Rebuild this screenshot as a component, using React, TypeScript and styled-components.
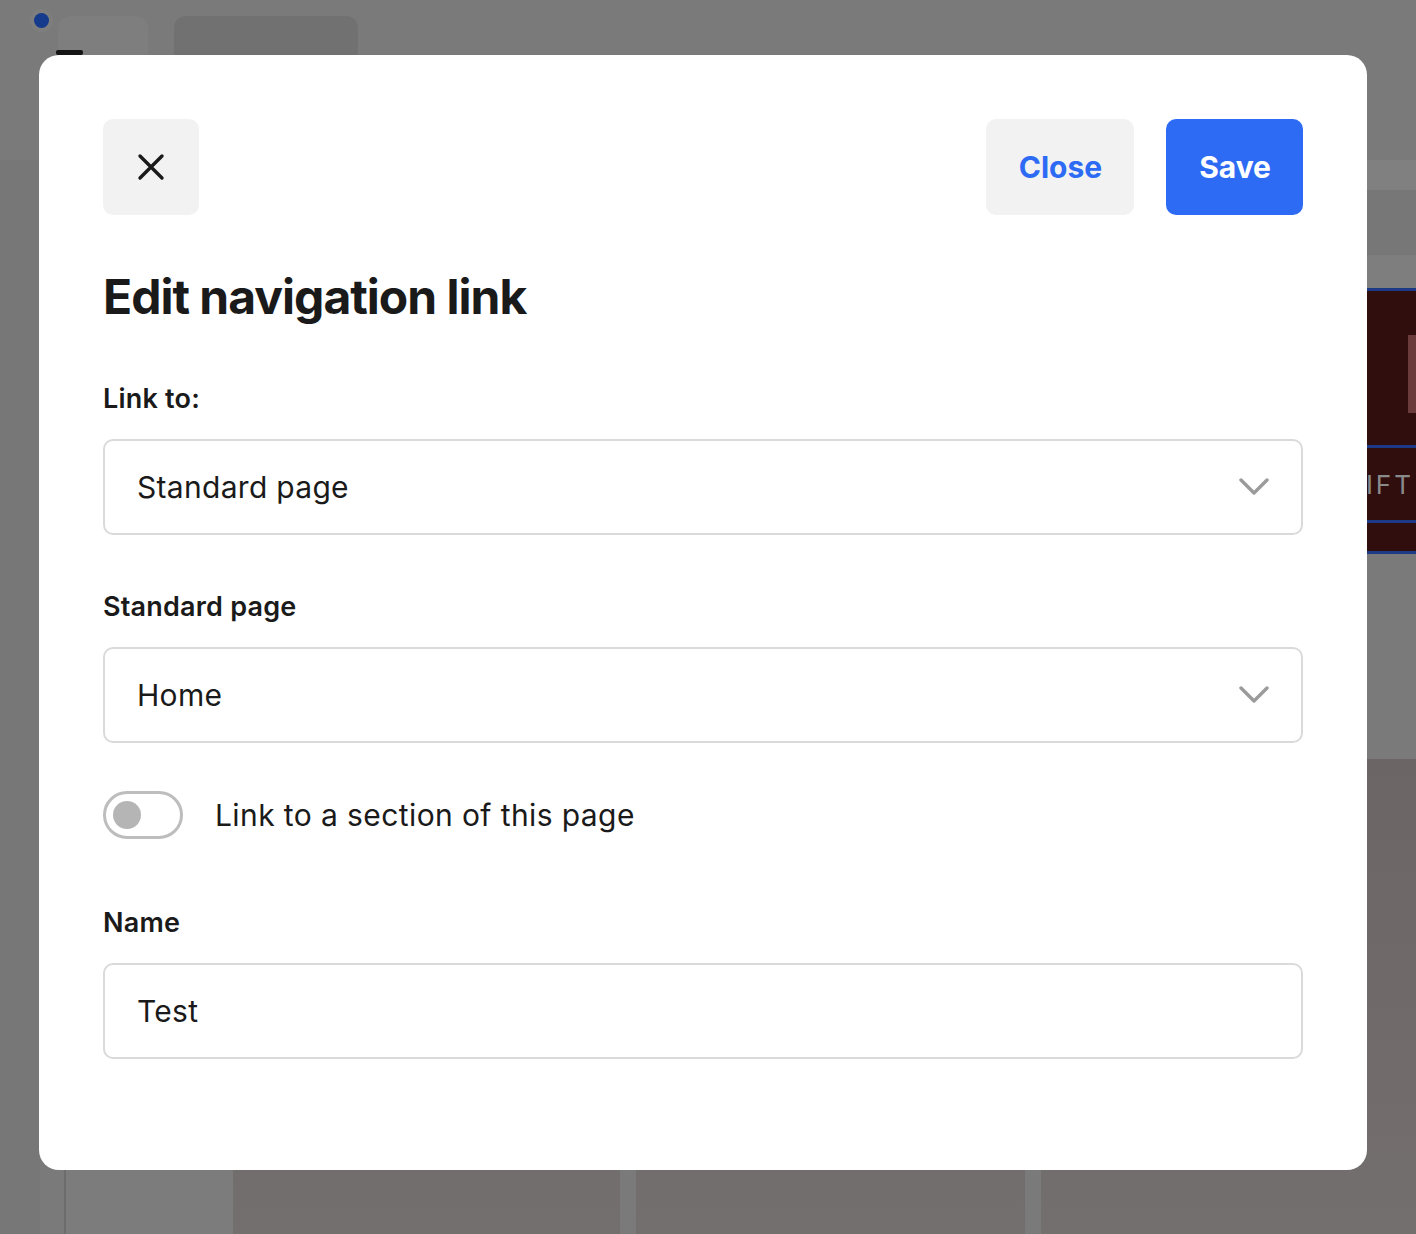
import React from 'react'
import styled, { createGlobalStyle } from 'styled-components'

const GlobalStyle = createGlobalStyle`
  html, body {
    margin: 0;
    padding: 0;
    width: 1416px;
    height: 1234px;
    overflow: hidden;
    background: #7a7a7a;
    font-family: Inter, "Liberation Sans", sans-serif;
  }
  * { box-sizing: border-box; }
`

/* ---------- dimmed page behind the dialog ---------- */

const Page = styled.div`
  width: 1416px;
  height: 1234px;
  display: flex;
  flex-direction: column;
  background: #7a7a7a;
`

const TopBar = styled.div`
  height: 160px;
  flex-shrink: 0;
  display: flex;
  align-items: flex-start;
  padding: 16px 0 0 34px;
  gap: 10px;
`

const Dot = styled.span`
  width: 15px;
  height: 15px;
  margin-top: -3px;
  border-radius: 50%;
  background: #163a8c;
  box-shadow: 0 0 0 4px #7e7e7e;
`

const SideCard = styled.div`
  width: 90px;
  height: 160px;
  margin-left: -1px;
  border-radius: 12px 12px 0 0;
  background: #7e7e7e;
  padding: 34px 0 0 0;
`

const MenuBar = styled.div`
  width: 27px;
  height: 5px;
  margin-left: -2px;
  background: #151515;
  border-radius: 2px;
`

const Tab = styled.div`
  width: 184px;
  height: 140px;
  margin-left: 16px;
  border-radius: 12px 12px 0 0;
  background: #717171;
`

const Body = styled.div`
  flex: 1;
  display: flex;
`

const Sidebar = styled.div`
  width: 233px;
  flex-shrink: 0;
  display: flex;
`

const Gutter = styled.div`
  width: 40px;
  background: #777777;
`

const Rail = styled.div`
  width: 26px;
  background: #7a7a7a;
  border-right: 2px solid #6c6c6c;
`

const SidePanel = styled.div`
  flex: 1;
  background: linear-gradient(#7a7a7a, #7c7c7c);
`

const Main = styled.div`
  flex: 1;
  display: flex;
  flex-direction: column;
`

const Band = styled.div<{ $h: number; $bg: string }>`
  height: ${(p) => p.$h}px;
  flex-shrink: 0;
  background: ${(p) => p.$bg};
`

const Banner = styled.div`
  height: 266px;
  flex-shrink: 0;
  background: #300e0e;
  border-top: 3px solid #1d3a86;
  border-bottom: 3px solid #1d3a86;
  display: flex;
  flex-direction: column;
  align-items: flex-end;
`

const BannerImage = styled.div`
  width: 8px;
  height: 78px;
  margin-top: 44px;
  background: #6b3a3a;
`

const BannerNav = styled.div`
  align-self: stretch;
  margin-top: 32px;
  height: 78px;
  border-top: 3px solid #1d3a86;
  border-bottom: 3px solid #1d3a86;
  display: flex;
  align-items: center;
  justify-content: flex-end;
  padding-right: 2px;
  color: #8a8a8a;
  font-size: 26px;
  letter-spacing: 3px;
  white-space: nowrap;
`

const CardGrid = styled.div`
  flex: 1;
  display: grid;
  grid-template-columns: 387px 389px 1fr;
  gap: 16px;
  padding-top: 205px;
`

const Card = styled.div`
  background: linear-gradient(#6b6665, #736f6e);
`

/* ---------- dialog ---------- */

const Overlay = styled.div`
  position: fixed;
  inset: 0;
  padding: 55px 0 0 39px;
`

const Dialog = styled.div`
  width: 1328px;
  height: 1115px;
  background: #ffffff;
  border-radius: 20px;
  padding: 64px 64px 111px;
  display: flex;
  flex-direction: column;
  color: #1a1a1a;
`

const Toolbar = styled.div`
  display: flex;
  align-items: center;
  gap: 32px;
`

const IconButton = styled.button`
  width: 96px;
  height: 96px;
  border: none;
  border-radius: 10px;
  background: #f2f2f2;
  display: flex;
  align-items: center;
  justify-content: center;
  padding: 0;
  margin-right: auto;
`

const ActionButton = styled.button<{ $primary?: boolean }>`
  height: 96px;
  padding: 0 32px 0 33px;
  border: none;
  border-radius: 10px;
  font-family: Inter, "Liberation Sans", sans-serif;
  font-size: 30px;
  font-weight: 700;
  background: ${(p) => (p.$primary ? '#2e6bf5' : '#f2f2f2')};
  color: ${(p) => (p.$primary ? '#ffffff' : '#2e6bf5')};
`

const Title = styled.h1`
  margin: 53px 0 0;
  font-size: 48px;
  line-height: 58px;
  font-weight: 700;
  letter-spacing: -1px;
`

const Field = styled.div<{ $gap: number }>`
  margin-top: ${(p) => p.$gap}px;
  display: flex;
  flex-direction: column;
  gap: 23px;
`

const Label = styled.label`
  font-size: 27px;
  line-height: 34px;
  font-weight: 600;
  letter-spacing: 0.2px;
`

const Control = styled.div`
  height: 96px;
  border: 2px solid #dadada;
  border-radius: 10px;
  display: flex;
  align-items: center;
  justify-content: space-between;
  padding: 0 32px;
  font-size: 30px;
  font-weight: 400;
  letter-spacing: 0.3px;
`

const ToggleRow = styled.div`
  margin-top: 48px;
  display: flex;
  align-items: center;
  gap: 32px;
  font-size: 30px;
  letter-spacing: 0.4px;
`

const Switch = styled.span`
  width: 80px;
  height: 48px;
  border: 3px solid #bdbdbd;
  border-radius: 24px;
  display: flex;
  align-items: center;
  padding: 0 7px;
`

const Knob = styled.span`
  width: 28px;
  height: 28px;
  border-radius: 50%;
  background: #b5b5b5;
`

const CloseIcon = () => (
  <svg width="28" height="28" viewBox="0 0 28 28">
    <path d="M3 3 L25 25 M25 3 L3 25" stroke="#1a1a1a" strokeWidth="3.4" strokeLinecap="round" />
  </svg>
)

const Chevron = () => (
  <svg width="30" height="18" viewBox="0 0 30 18">
    <polyline points="2,2 15,15 28,2" fill="none" stroke="#9b9b9b" strokeWidth="3.4" strokeLinecap="round" strokeLinejoin="round" />
  </svg>
)

const BackgroundPage = () => (
  <Page>
    <TopBar>
      <Dot />
      <SideCard>
        <MenuBar />
      </SideCard>
      <Tab />
    </TopBar>
    <Body>
      <Sidebar>
        <Gutter />
        <Rail />
        <SidePanel />
      </Sidebar>
      <Main>
        <Band $h={30} $bg="#808080" />
        <Band $h={65} $bg="#777777" />
        <Band $h={33} $bg="#7e7e7e" />
        <Banner>
          <BannerImage />
          <BannerNav>GIFT</BannerNav>
        </Banner>
        <CardGrid>
          <Card />
          <Card />
          <Card />
        </CardGrid>
      </Main>
    </Body>
  </Page>
)

export default function App() {
  return (
    <>
      <GlobalStyle />
      <BackgroundPage />
      <Overlay>
        <Dialog>
          <Toolbar>
            <IconButton aria-label="Close dialog">
              <CloseIcon />
            </IconButton>
            <ActionButton>Close</ActionButton>
            <ActionButton $primary>Save</ActionButton>
          </Toolbar>
          <Title>Edit navigation link</Title>
          <Field $gap={56}>
            <Label>Link to:</Label>
            <Control>
              Standard page
              <Chevron />
            </Control>
          </Field>
          <Field $gap={55}>
            <Label>Standard page</Label>
            <Control>
              Home
              <Chevron />
            </Control>
          </Field>
          <ToggleRow>
            <Switch>
              <Knob />
            </Switch>
            Link to a section of this page
          </ToggleRow>
          <Field $gap={67}>
            <Label>Name</Label>
            <Control>Test</Control>
          </Field>
        </Dialog>
      </Overlay>
    </>
  )
}
